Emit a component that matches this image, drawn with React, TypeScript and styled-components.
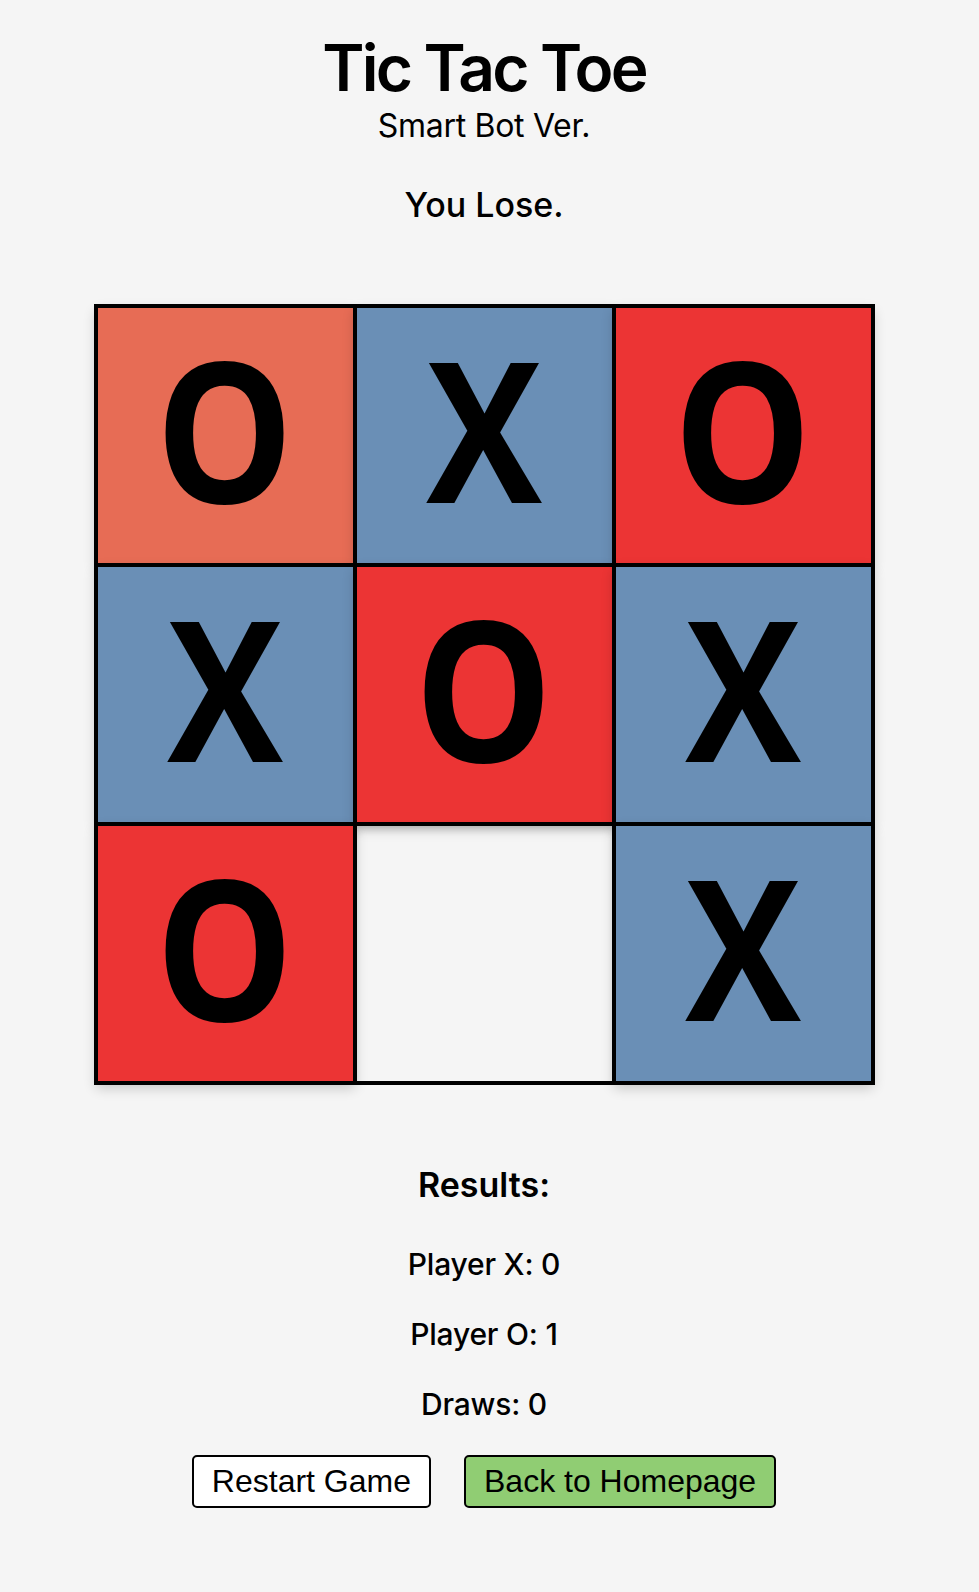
import React from "react";
import styled, { createGlobalStyle } from "styled-components";

type Mark = "X" | "O" | "";
type Tone = "win" | "last" | "x" | "none";

const board: { mark: Mark; tone: Tone }[] = [
  { mark: "O", tone: "last" },
  { mark: "X", tone: "x" },
  { mark: "O", tone: "win" },
  { mark: "X", tone: "x" },
  { mark: "O", tone: "win" },
  { mark: "X", tone: "x" },
  { mark: "O", tone: "win" },
  { mark: "", tone: "none" },
  { mark: "X", tone: "x" },
];

const toneColors: Record<Tone, string> = {
  win: "#ec3434",
  last: "#e76c55",
  x: "#6a8fb6",
  none: "transparent",
};

const GlobalStyle = createGlobalStyle`
  html, body {
    margin: 0;
    padding: 0;
    background: #f5f5f5;
  }
`;

const Page = styled.div`
  width: calc(100% - 11px);
  padding-top: 30px;
  padding-bottom: 84px;
  display: flex;
  flex-direction: column;
  align-items: center;
  font-family: Inter, "Noto Sans", sans-serif;
  color: #000;
`;

const Title = styled.h1`
  margin: 0;
  font-size: 64px;
  line-height: 1.2;
  font-weight: 600;
  letter-spacing: -2.8px;
`;

const Subtitle = styled.p`
  margin: 0;
  font-size: 32px;
  line-height: 1.2;
  font-weight: 400;
  letter-spacing: -0.3px;
`;

const Status = styled.h2`
  margin: 40px 0 0;
  font-size: 34px;
  line-height: 1.2;
  font-weight: 500;
  letter-spacing: 0;
`;

const Board = styled.div`
  margin-top: 78px;
  display: grid;
  grid-template-columns: repeat(3, 259px);
  grid-template-rows: repeat(3, 259px);
  border: 2px solid #000;
`;

const Cell = styled.div<{ $tone: Tone }>`
  box-sizing: border-box;
  border: 2px solid #000;
  padding-bottom: 16px;
  background: ${({ $tone }) => toneColors[$tone]};
  box-shadow: ${({ $tone }) =>
    $tone === "none"
      ? "inset 0 6px 8px -4px rgba(0, 0, 0, 0.18)"
      : "0 5px 12px rgba(0, 0, 0, 0.2)"};
  display: flex;
  align-items: center;
  justify-content: center;
  user-select: none;
`;

const Glyph = styled.span`
  display: inline-block;
  font-family: "Open Sans", "DejaVu Sans", sans-serif;
  font-weight: 700;
  font-size: 195px;
  line-height: 1;
  transform: scaleX(0.89);
`;

const ResultsTitle = styled.h2`
  margin: 80px 0 0;
  font-size: 34px;
  line-height: 1.2;
  font-weight: 600;
  letter-spacing: 0;
`;

const Score = styled.p<{ $first?: boolean }>`
  margin: ${({ $first }) => ($first ? "40px" : "34px")} 0 0;
  font-size: 30px;
  line-height: 1.2;
  font-weight: 500;
  letter-spacing: -0.2px;
`;

const Actions = styled.div`
  margin-top: 33px;
  display: flex;
  gap: 33px;
`;

const Button = styled.button<{ $primary?: boolean }>`
  font-family: "Liberation Sans", Arial, sans-serif;
  font-size: 32px;
  line-height: 1.15;
  padding: 6px 18px;
  border: 2px solid #000;
  border-radius: 5px;
  background: ${({ $primary }) => ($primary ? "#90cd73" : "#fff")};
  color: #000;
  cursor: pointer;
`;

export default function App() {
  return (
    <>
      <GlobalStyle />
      <Page>
        <Title>Tic Tac Toe</Title>
        <Subtitle>Smart Bot Ver.</Subtitle>
        <Status>You Lose.</Status>
        <Board>
          {board.map((cell, i) => (
            <Cell key={i} $tone={cell.tone}>
              {cell.mark && <Glyph>{cell.mark}</Glyph>}
            </Cell>
          ))}
        </Board>
        <ResultsTitle>Results:</ResultsTitle>
        <Score $first>Player X: 0</Score>
        <Score>Player O: 1</Score>
        <Score>Draws: 0</Score>
        <Actions>
          <Button>Restart Game</Button>
          <Button $primary>Back to Homepage</Button>
        </Actions>
      </Page>
    </>
  );
}
